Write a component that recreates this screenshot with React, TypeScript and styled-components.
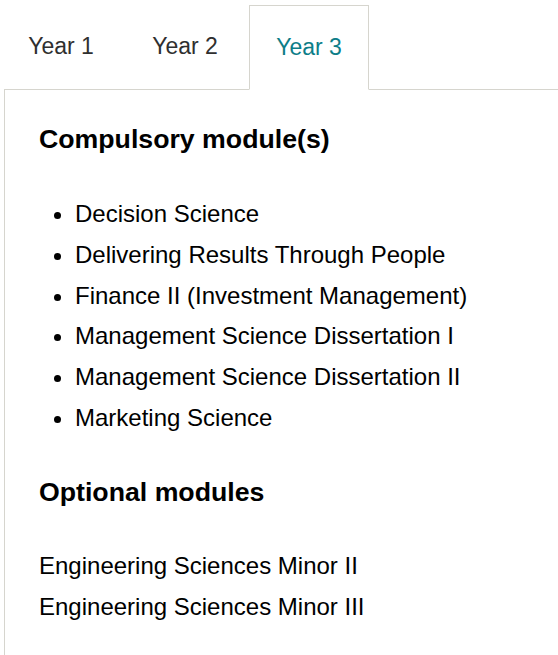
import React, { useState } from "react";
import styled, { createGlobalStyle } from "styled-components";

const GlobalStyle = createGlobalStyle`
  html, body {
    margin: 0;
    padding: 0;
    background: #ffffff;
    font-family: "Liberation Sans", Arial, sans-serif;
    color: #000000;
  }
  #root {
    overflow: hidden;
  }
`;

const Wrapper = styled.div`
  margin-right: -20px;
`;

const TabList = styled.div`
  display: flex;
  align-items: flex-end;
  gap: 4px;
  padding: 4px 0 0 1px;
`;

const Tab = styled.button<{ $active: boolean }>`
  position: relative;
  z-index: ${(p) => (p.$active ? 1 : 0)};
  width: 120px;
  height: 85px;
  padding: 0;
  margin-bottom: ${(p) => (p.$active ? "-1px" : "0")};
  border: 1px solid ${(p) => (p.$active ? "#d6d5ce" : "transparent")};
  border-bottom: 1px solid transparent;
  background: ${(p) => (p.$active ? "#ffffff" : "transparent")};
  font-family: "Liberation Sans", Arial, sans-serif;
  font-size: 23px;
  text-align: center;
  color: ${(p) => (p.$active ? "#0d7d88" : "#2f2f2f")};
  cursor: pointer;
`;

const Panel = styled.div`
  margin-left: 4px;
  border-top: 1px solid #d6d5ce;
  border-left: 1px solid #d6d5ce;
  border-right: 1px solid #d6d5ce;
  padding: 33px 34px 40px;
  min-height: 560px;
`;

const Heading = styled.h2`
  margin: 0;
  font-size: 26.7px;
  font-weight: 700;
  line-height: 1.2;
`;

const BulletList = styled.ul`
  margin: 39px 0 37px;
  padding-left: 36px;
  font-size: 24px;
  line-height: 1.7;
`;

const PlainList = styled.ul`
  list-style: none;
  margin: 38px 0 0;
  padding: 0;
  font-size: 24px;
  line-height: 1.7;
`;

const Item = styled.li``;

const years = ["Year 1", "Year 2", "Year 3"];

const compulsory = [
  "Decision Science",
  "Delivering Results Through People",
  "Finance II (Investment Management)",
  "Management Science Dissertation I",
  "Management Science Dissertation II",
  "Marketing Science",
];

const optional = ["Engineering Sciences Minor II", "Engineering Sciences Minor III"];

export default function App() {
  const [active, setActive] = useState(2);
  return (
    <>
      <GlobalStyle />
      <Wrapper>
        <TabList>
          {years.map((y, i) => (
            <Tab key={y} $active={active === i} onClick={() => setActive(i)}>
              {y}
            </Tab>
          ))}
        </TabList>
        <Panel>
          <Heading>Compulsory module(s)</Heading>
          <BulletList>
            {compulsory.map((m) => (
              <Item key={m}>{m}</Item>
            ))}
          </BulletList>
          <Heading>Optional modules</Heading>
          <PlainList>
            {optional.map((m) => (
              <Item key={m}>{m}</Item>
            ))}
          </PlainList>
        </Panel>
      </Wrapper>
    </>
  );
}
